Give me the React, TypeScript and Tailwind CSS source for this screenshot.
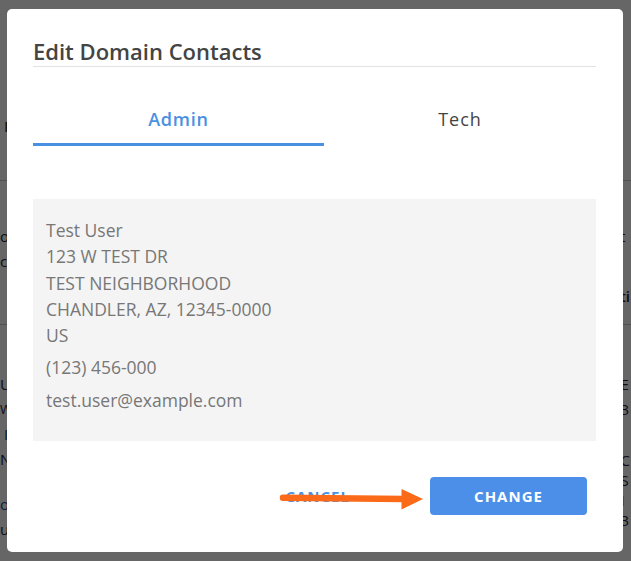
import React from "react";

const BackgroundPage = () => {
  return (
    <div className="h-[561px] overflow-hidden bg-white font-['Open_Sans',sans-serif] text-[15px] leading-[25px] text-[#1c2541]">
      <div className="h-[181px] border-b border-[#c9c9c9] pt-[114px]">
        <div className="pl-[4px] font-semibold text-[#4a3414]">N</div>
      </div>
      <div className="flex h-[144px] justify-between border-b border-[#c9c9c9] pt-[43px]">
        <div>
          <p>o</p>
          <p>c</p>
        </div>
        <div className="pr-[1px]">
          <p>t</p>
          <p className="mt-[35px] font-semibold">ti</p>
        </div>
      </div>
      <div className="flex justify-between pt-[47px]">
        <div>
          <p>U</p>
          <p className="text-[13px]">W</p>
          <p className="pl-[4px] text-[#1a2f7a]">I</p>
          <p>N</p>
          <p className="mt-[20px] text-[#1a4fa0]">o</p>
          <p>u</p>
        </div>
        <div className="pr-[1px]">
          <p>E</p>
          <p>3</p>
          <div className="mt-[28px] leading-[20px]">
            <p>C</p>
            <p>S</p>
            <p className="text-[#1a4fa0]">I</p>
            <p>3</p>
          </div>
        </div>
      </div>
    </div>
  );
};

const ContactsModal = () => {
  return (
    <div className="relative h-[543px] w-[616px] rounded-[5px] bg-white pl-[26px] pr-[27px] pt-[28px] font-['Open_Sans',sans-serif]">
      <h2 className="border-b border-[#e3e3e3] pb-[1px] text-[22px] font-semibold leading-[28px] text-[#444]">
        Edit Domain Contacts
      </h2>

      <div className="flex">
        <button className="w-[291px] border-b-[3px] border-[#4a90e2] pb-[12px] pt-[40px] text-[18px] font-semibold leading-[24px] tracking-[0.8px] text-[#4a90e2]">
          Admin
        </button>
        <button className="flex-1 border-b-[3px] border-transparent pb-[12px] pt-[40px] text-[18px] font-medium leading-[24px] tracking-[1px] text-[#444]">
          Tech
        </button>
      </div>

      <div className="mt-[53px] bg-[#f4f4f4] px-[13px] pb-[28px] pt-[18px] text-[17.5px] leading-[26.3px] text-[#777]">
        <p>Test User</p>
        <p>123 W TEST DR</p>
        <p>TEST NEIGHBORHOOD</p>
        <p>CHANDLER, AZ, 12345-0000</p>
        <p>US</p>
        <p className="mt-[6px]">(123) 456-000</p>
        <p className="mt-[6px]">test.user@example.com</p>
      </div>

      <div className="mt-[36px] flex items-center justify-end pr-[9px]">
        <button className="text-[15px] font-bold tracking-[1px] text-[#4a90e2]">CANCEL</button>
        <button className="ml-[80px] h-[38px] w-[157px] rounded-[4px] bg-[#4b8fe8] text-[15px] font-bold tracking-[1px] text-white">
          CHANGE
        </button>
      </div>

      {/* annotation arrow drawn over the cancel button */}
      <svg
        className="pointer-events-none absolute left-0 top-0 h-full w-full"
        viewBox="0 0 616 543"
      >
        <line x1="276" y1="488.7" x2="397" y2="490" stroke="#fa6a18" strokeWidth="6.5" strokeLinecap="round" />
        <polygon points="394.5,480 416,490 394.5,500.5" fill="#fa6a18" />
      </svg>
    </div>
  );
};

export default function App() {
  return (
    <div className="relative h-[561px] w-full overflow-hidden">
      <BackgroundPage />
      <div className="fixed inset-0 bg-black/60 pl-[7px] pt-[9px]">
        <ContactsModal />
      </div>
    </div>
  );
}
